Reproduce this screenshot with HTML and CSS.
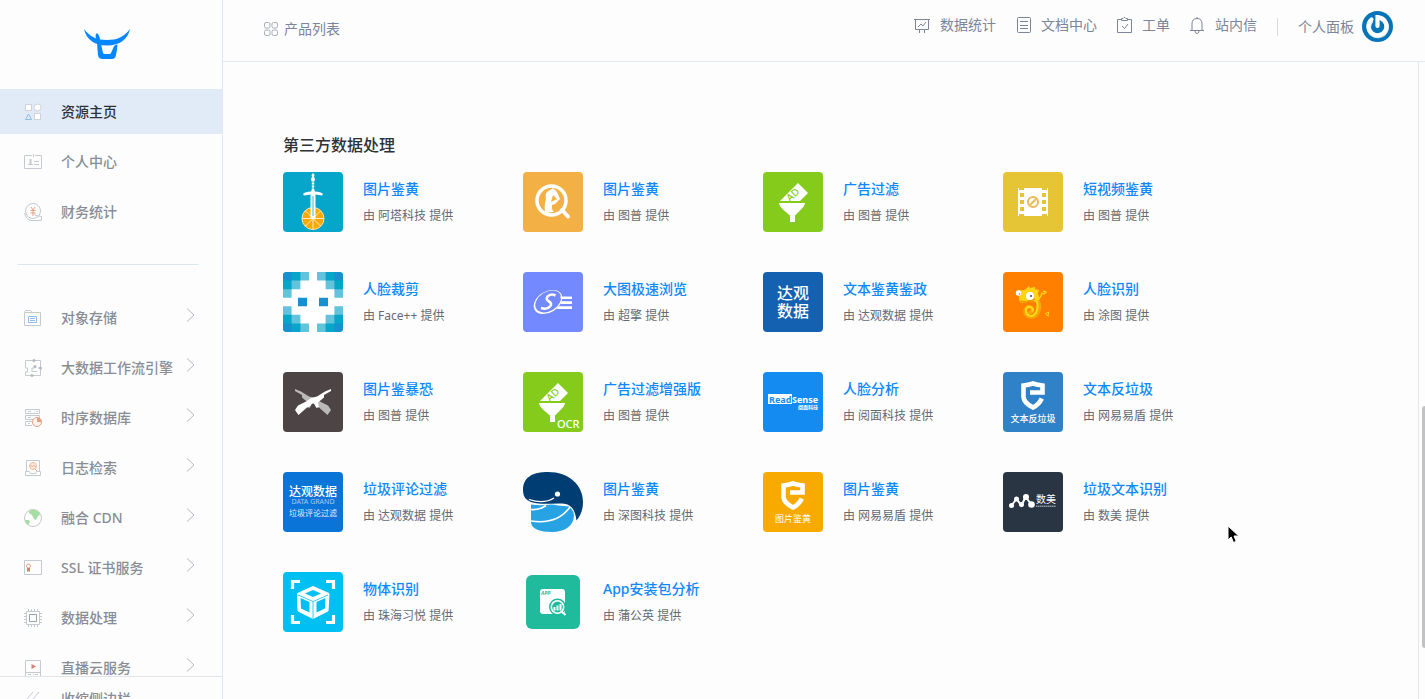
FILE: index.html
```html
<!DOCTYPE html>
<html lang="zh-CN">
<head>
<meta charset="utf-8">
<title>产品列表</title>
<link rel="stylesheet" href="styles.css">
</head>
<body>
<svg class="defs" aria-hidden="true">
  <symbol id="chevron" viewBox="0 0 10 16"><path d="M1 1.500 8 8 1 14.500" fill="none" stroke="#b4b9c6"/></symbol>
  <symbol id="shield" viewBox="0 0 60 60"><path d="M27 20.500H39.500V13.500Q35 13 30 11.500 25 13 20.500 13.500V25Q21 31 30 35.500 36 32.500 38.800 26.500" fill="none" stroke="#fff" stroke-width="4.600"/></symbol>
  <symbol id="funnel" viewBox="0 0 60 60">
    <path d="M16 31h26q0 3-5 7.500l-5 5V50h-5v-6.500l-6-5q-5-4.500-5-7.500zM17 29 35 11l10 10-8 8z" fill="#fff"/>
    <text x="27" y="30" font-size="10" font-weight="500" fill="#84cb1c" transform="rotate(-42 27 30)">AD</text>
    <path d="M16 30h27" stroke="#84cb1c" stroke-width="2"/>
  </symbol>
  <symbol id="rifle" viewBox="0 0 60 60"><path d="M48 17 42 19.500 34 24.500 28 26 24 29 15 33.500 12 38 15.500 43 24 35.500 27 34.500 29 31.500 31 31.500 33.500 36 36 35 35 30.500 41 25.500 41 23 48 19z"/></symbol>
</svg>
<div class="app">
  <aside class="sidebar">
    <a class="logo" href="#" aria-label="首页">
      <svg width="46" height="32" viewBox="0 0 46 32" fill="#0787ff"><path d="M0 1C6 9 13 12 23 12S40 9 46 1C44 11 36 17.500 23 17.500 10 17.500 2 11 0 1z"/><path d="M11.500 8q1-6 4 1l3.500 16q.3 1 1.500 1h5q1 0 1.500-1l2-4.500q1-4 4.500-4-.3 5-1.500 10.500-.6 4-4 4H18.500q-4 0-4.500-4L13 15z"/></svg>
    </a>
    <nav class="menu">
      <a class="menu-item active" href="#"><svg viewBox="0 0 20 20"><g fill="#fff" stroke="#cfd2d8"><rect x="2.500" y="2.500" width="6" height="6"/><circle cx="14.500" cy="5.500" r="3.500"/><rect x="11.500" y="11.500" width="6" height="6"/></g><path d="M5.500 12 2.500 17.500h6z" fill="none" stroke="#90bce8"/></svg><span>资源主页</span></a>
      <a class="menu-item" href="#"><svg viewBox="0 0 20 20"><path d="M9 3.500H1.500v13h17v-13H12M10.500 2v3M5 12.500h5M11 9.500h5M11 12.500h5"/><path d="M7.500 7v5" stroke-width="2"/></svg><span>个人中心</span></a>
      <a class="menu-item" href="#"><svg viewBox="0 0 20 20"><circle cx="10" cy="9" r="7.500"/><path d="M1.500 11Q3 17.500 8 18.500h10.500v-4l-6-1-1-2"/><path class="red" d="m8 5 2 3 2-3M7.500 8.500h5M7.500 11h5M10 8v6"/></svg><span>财务统计</span></a>
      <hr class="divider">
      <a class="menu-item" href="#"><svg viewBox="0 0 20 20"><path d="M1.500 17.500v-13l1-2h5l2 2H17.500v13zM2 4.500h8"/><path class="blue" d="M5.500 8.500h8v6h-8zM7 10.500h5M7 12.500h5"/></svg><span>对象存储</span><svg class="chev"><use href="#chevron"/></svg></a>
      <a class="menu-item" href="#"><svg viewBox="0 0 20 20"><path d="M2.500 7V2.500h15v15h-15V14h2v-4h-2zM9 14v-4h3M9 13.500h5M15 10h3"/><g fill="#b4b9c0" stroke="none"><circle cx="11" cy="2.500" r="1.500"/><circle cx="17.500" cy="10" r="1.500"/><circle cx="9" cy="17.500" r="1.500"/><circle cx="12" cy="8.500" r="1.500"/></g></svg><span>大数据工作流引擎</span><svg class="chev"><use href="#chevron"/></svg></a>
      <a class="menu-item" href="#"><svg viewBox="0 0 20 20"><path d="M2.500 1.500h14v4h-14zM2.500 7.500h14v4h-14zM9 17.500H2.500v-4H9M5 3.500h3M5 9.500h3M5 15.500h2M13 3.500h2"/><circle cx="14" cy="14" r="4.500" fill="#fff4ec" stroke="#e3a087"/><path d="M14 14V9.500A4.500 4.500 0 0 1 18.500 14z" fill="#e3a087" stroke="none"/></svg><span>时序数据库</span><svg class="chev"><use href="#chevron"/></svg></a>
      <a class="menu-item" href="#"><svg viewBox="0 0 20 20"><path d="M3.500 13V2.500h13V13M2.500 13.500h4l1 2h5l1-2h4v4h-15z"/><circle cx="10" cy="8" r="3.500" fill="#fde8da" stroke="#efbd9b"/><path class="red" d="m7.500 7.500 2 1 1-1 2 1M12 11l2 2"/></svg><span>日志检索</span><svg class="chev"><use href="#chevron"/></svg></a>
      <a class="menu-item" href="#"><svg viewBox="0 0 20 20"><circle cx="10" cy="10" r="8.500"/><path d="M6 3q5-3 10 1l1 3-2 1-2 4-2-1-2-4-3-2zM2 12l4 0 1 2-2 3q-3-2-3-5z" fill="#a5dda3" stroke="none"/></svg><span>融合 CDN</span><svg class="chev"><use href="#chevron"/></svg></a>
      <a class="menu-item" href="#"><svg viewBox="0 0 20 20"><path d="M1.500 2.500h17v14h-17z"/><circle class="red" cx="5.500" cy="8" r="2"/><path d="M4 10h3v4l-1.500-1L4 14z" fill="#dc7d6c" stroke="none"/></svg><span>SSL 证书服务</span><svg class="chev"><use href="#chevron"/></svg></a>
      <a class="menu-item" href="#"><svg viewBox="0 0 20 20"><path d="M3.500 3.500h13v13h-13zM5.500 1v2M8.500 1v2M11.500 1v2M14.500 1v2M5.500 17v2M8.500 17v2M11.500 17v2M14.500 17v2M1 5.500h2M1 8.500h2M1 11.500h2M1 14.500h2M17 5.500h2M17 8.500h2M17 11.500h2M17 14.500h2"/><path d="M6.500 6.500h7v7h-7z" stroke="#9ca1a9"/></svg><span>数据处理</span><svg class="chev"><use href="#chevron"/></svg></a>
      <a class="menu-item" href="#"><svg viewBox="0 0 20 20"><path d="M2.500 2.500h15v16h-15zM3 14.500h14M5 16.500h3M10 16.500h1M12 16.500h3"/><path d="M8.500 6l4.500 2.500L8.500 11z" fill="#dc7d7d" stroke="none"/></svg><span>直播云服务</span><svg class="chev"><use href="#chevron"/></svg></a>
    </nav>
    <button class="collapse" type="button"><svg viewBox="0 0 20 20"><path d="m10 3-6 7 6 7M16 3l-6 7 6 7"/></svg><span>收缩侧边栏</span></button>
  </aside>

  <div class="page">
    <header class="topbar">
      <a class="products" href="#"><svg width="14" height="14" viewBox="0 0 14 14"><rect x=".5" y=".5" width="5.500" height="5.500" rx="1.500"/><rect x="8" y=".5" width="5.500" height="5.500" rx="1.500"/><rect x=".5" y="8" width="5.500" height="5.500" rx="1.500"/><rect x="8" y="8" width="5.500" height="5.500" rx="1.500"/></svg>产品列表</a>
      <nav class="links">
        <a href="#"><svg viewBox="0 0 16 18"><path d="M0 3.500h16M1.500 4v9.500h13V4M4 11l3-3 2 2 3-4M5.500 14v3M10.500 14v3"/></svg>数据统计</a>
        <a href="#"><svg viewBox="0 0 16 18"><rect x="2.500" y="1.500" width="13" height="15" rx="1"/><path d="M5 5.500h8M5 9.500h8M5 12.500h8"/></svg>文档中心</a>
        <a href="#"><svg viewBox="0 0 16 18"><path d="M5 3.500H1.500v13h14v-13H12M5.500 4.500v-2H7l1-1h1l1 1h1.500v2zM6 10l2.500 2.500L12 8"/></svg>工单</a>
        <a href="#"><svg viewBox="0 0 16 18"><path d="M1 14.500h14M3 14V8q0-5.500 5-5.500T13 8v6M6 15q0 2.500 2 2.500t2-2.500M8 1v1"/></svg>站内信</a>
      </nav>
      <a class="user" href="#">个人面板
        <svg width="31" height="31" viewBox="0 0 31 31"><circle cx="15.500" cy="15.500" r="15.500" fill="#0674b8" stroke="none"/><path d="M9.500 8.500a9 9 0 1 0 9-1.700" fill="none" stroke="#cfd8de" stroke-width="4.400" transform="translate(.4 .8)"/><path d="M9.500 8.500a9 9 0 1 0 9-1.700q-1.500-.8-3-.8v9" fill="none" stroke="#fff" stroke-width="4.200" stroke-linecap="round"/></svg>
      </a>
    </header>
    <div class="body">
      <main class="content">
        <h2>第三方数据处理</h2>
        <ul class="grid">
          <li class="card"><svg class="tile" style="background:#05a6c9" viewBox="0 0 60 60"><circle cx="30" cy="46.500" r="11" fill="#fba800" stroke="#ffe7b5"/><path d="M30 36v21M19.500 46.500h21M22.500 39l15 15M37.500 39l-15 15" stroke="#fff" stroke-width=".8"/><path d="M20 22q2-2.500 8-2.500l.8-2V10l-.8-3 1-2-.5-2L30 1l1.500 2-.5 2 1 2-.8 3v7.500l.8 2q6 0 8 2.500l-1 1.500-6.500-1V46h-5V22.500l-6.500 1z" fill="#fff"/><path d="M30 24v20M28 10h4M28 13h4M28 16h4" stroke="#05a6c9" stroke-width=".8"/></svg><div><a href="#">图片鉴黄</a><p>由 阿塔科技 提供</p></div></li>
          <li class="card"><svg class="tile" style="background:#f3b044" viewBox="0 0 60 60"><circle cx="28.500" cy="28.500" r="14.500" fill="none" stroke="#fff" stroke-width="3.600"/><path d="m39 38 6 6.500" stroke="#fff" stroke-width="4" stroke-linecap="round"/><path d="M22 41q-1-9 1-14-1-5 1-7l6-4 4 4 3 7-5 5-3 1q-1 4 2 7zM30 23l-2 7 6-3z" fill="#fff" fill-rule="evenodd"/></svg><div><a href="#">图片鉴黄</a><p>由 图普 提供</p></div></li>
          <li class="card"><svg class="tile" style="background:#84cb1c" viewBox="0 0 60 60"><use href="#funnel"/></svg><div><a href="#">广告过滤</a><p>由 图普 提供</p></div></li>
          <li class="card"><svg class="tile" style="background:#e5c436" viewBox="0 0 60 60"><path d="M15 16h30v28H15z" fill="#fff"/><path d="M16 16h5v2h-5zM17 21h4v4h-4zM17 28h4v4h-4zM17 35h4v4h-4zM16 42h5v2h-5zM39 16h5v2h-5zM39 21h4v4h-4zM39 28h4v4h-4zM39 35h4v4h-4zM39 42h5v2h-5z" fill="#e5c436"/><circle cx="30" cy="30" r="5" fill="none" stroke="#edb95c" stroke-width="2"/><path d="m27 33 6-6" stroke="#edb95c" stroke-width="2"/></svg><div><a href="#">短视频鉴黄</a><p>由 图普 提供</p></div></li>

          <li class="card"><svg class="tile" style="background:#fff" viewBox="0 0 60 60"><path fill="#62c3dd" d="M0 0h26v8.600h-8.600v8.600H8.600v8.600H0zM60 0H34v8.600h8.600v8.600h8.800v8.600H60zM0 60h26v-8.600h-8.600v-8.600H8.600v-8.600H0zM60 60H34v-8.600h8.600v-8.600h8.800v-8.600H60z"/><path fill="#05a6c9" d="M0 0h17.400v8.600H8.600v8.600H0zM60 0H42.600v8.600h8.800v8.600H60zM0 60h17.400v-8.600H8.600v-8.600H0zM60 60H42.600v-8.600h8.800v-8.600H60z"/><path fill="#1690cf" d="M0 0h8.600v8.600H0zM51.400 0H60v8.600h-8.600zM0 51.400h8.600V60H0zM51.400 51.400H60V60h-8.600zM15 25.700h9v8.600h-9zM36 25.700h9v8.600h-9z"/></svg><div><a href="#">人脸裁剪</a><p>由 Face++ 提供</p></div></li>
          <li class="card"><svg class="tile" style="background:#7289ff" viewBox="0 0 60 60"><g transform="rotate(-32 25 30)"><ellipse cx="25" cy="30" rx="15.500" ry="10.500" fill="#fff"/><ellipse cx="25.500" cy="29.600" rx="14" ry="9.600" fill="#7289ff"/></g><path d="M37 24.500h12v2.600H38zM37.500 29.300h11.500v2.600H36.500zM36 34.300h13v2.600H33.500z" fill="#fff"/><path d="M32.500 23.500q-5-2.500-8 1-2 3 1.500 5t1 5q-3 3.500-9 1.500" stroke="#fff" stroke-width="2.600" fill="none"/></svg><div><a href="#">大图极速浏览</a><p>由 超擎 提供</p></div></li>
          <li class="card"><svg class="tile" style="background:#1461b1" viewBox="0 0 60 60"><g fill="#fff" font-size="16" font-weight="500"><text x="14" y="27">达观</text><text x="14" y="45">数据</text></g></svg><div><a href="#">文本鉴黄鉴政</a><p>由 达观数据 提供</p></div></li>
          <li class="card"><svg class="tile" style="background:#ff8000" viewBox="0 0 60 60"><path d="M31 26q7 3 5 12-2 7-8 7-6-1-6-6 1-5 5-4 4 2 2 5-2 1-3-1" fill="none" stroke="#f5aa0a" stroke-width="3.500"/><path d="M31 26q5 4 3 12-2 6-6 6-5-1-5-6 1-4 5-3 3 2 1 4" fill="none" stroke="#ffda18" stroke-width="2"/><path d="M16 18q4 1 7-1l3-3 1 2 5-1v2l4 1-1 3 1 5-3 4-3-1-6 1-5 1q-4-2-3-7z" fill="#ffd215"/><path d="m35 28 3-4 1-3M40 19l3 1-2 2-3-1" stroke="#ffd215" stroke-width="1.500" fill="none"/><path d="M18 29q4 2 8 0l6-2" stroke="#f19300" stroke-width="1.500" fill="none"/><circle cx="27" cy="24" r="4" fill="#fff"/><circle cx="15.500" cy="21" r="2.800" fill="#fff"/><circle cx="28" cy="24" r="1" fill="#554433"/><circle cx="16.500" cy="22" r=".8" fill="#cc7700"/><path d="m42 42 4-2-1 3 1 1-3-1" stroke="#ffd215" fill="none"/></svg><div><a href="#">人脸识别</a><p>由 涂图 提供</p></div></li>

          <li class="card"><svg class="tile" style="background:#4d4545" viewBox="0 0 60 60"><use href="#rifle" fill="#bdb9b9" transform="matrix(-1 0 0 1 60 0)"/><use href="#rifle" fill="#fff"/></svg><div><a href="#">图片鉴暴恐</a><p>由 图普 提供</p></div></li>
          <li class="card"><svg class="tile" style="background:#84cb1c" viewBox="0 0 60 60"><use href="#funnel"/><text x="34" y="56" font-size="11" font-weight="500" fill="#fff">OCR</text></svg><div><a href="#">广告过滤增强版</a><p>由 图普 提供</p></div></li>
          <li class="card"><svg class="tile" style="background:#148bf0" viewBox="0 0 60 60"><path d="M5 22h24v10H5z" fill="#fff"/><text x="6" y="31" font-size="9" font-weight="700" fill="#148bf0">Read</text><text x="29" y="31" font-size="9" font-weight="700" fill="#fff">Sense</text><text x="35" y="37" font-size="5" font-weight="700" fill="#fff">阅面科技</text></svg><div><a href="#">人脸分析</a><p>由 阅面科技 提供</p></div></li>
          <li class="card"><svg class="tile" style="background:#3082c8" viewBox="0 0 60 60"><use href="#shield"/><text x="30" y="50" font-size="9" font-weight="500" text-anchor="middle" fill="#fff">文本反垃圾</text></svg><div><a href="#">文本反垃圾</a><p>由 网易易盾 提供</p></div></li>

          <li class="card"><svg class="tile" style="background:#0b74d8" viewBox="0 0 60 60"><g text-anchor="middle"><text x="30" y="24" font-size="12" font-weight="500" fill="#fff">达观数据</text><text x="30" y="32" font-size="7" fill="#a4cbf2">DATA GRAND</text><text x="30" y="44" font-size="8" fill="#e2effc">垃圾评论过滤</text></g></svg><div><a href="#">垃圾评论过滤</a><p>由 达观数据 提供</p></div></li>
          <li class="card"><svg class="tile" viewBox="0 0 60 60"><path d="M0 18C0 5 10 0 25 0c21 0 35 13 35 30 0 9-3 14-6.500 18.500C52 37 48 32 39 31.500 25 31 11 34 3 27 1 25 0 22 0 18z" fill="#003d73"/><path d="M6 27.500q15 5 25-1.500" fill="none" stroke="#fff" stroke-width="1.300"/><circle cx="34.500" cy="22" r="2.600" fill="#fff"/><path d="M8 32.500q8 1 15 .5 6-1 12 .5l11 1q5 4 5 9c0 10-9 16.500-22 16.500-12 0-20-3-21-9z" fill="#27a3e4"/><path d="M8 37.500q8 1 15-4M8 49q26 4 39-14" fill="none" stroke="#fff" stroke-width="1.600"/></svg><div><a href="#">图片鉴黄</a><p>由 深图科技 提供</p></div></li>
          <li class="card"><svg class="tile" style="background:#f8aa00" viewBox="0 0 60 60"><use href="#shield"/><text x="30" y="50" font-size="9" text-anchor="middle" fill="#fff">图片鉴黄</text></svg><div><a href="#">图片鉴黄</a><p>由 网易易盾 提供</p></div></li>
          <li class="card"><svg class="tile" style="background:#293543" viewBox="0 0 60 60"><path d="M8.500 33.500 13.500 27l5 6.500 4-8.500 6 7.500" fill="none" stroke="#fff" stroke-width="2"/><g fill="#fff"><circle cx="8.500" cy="33.500" r="2.500"/><circle cx="13.500" cy="27" r="2.500"/><circle cx="18.500" cy="32.500" r="2.500"/><circle cx="23" cy="25" r="3"/><circle cx="28.500" cy="32.500" r="3.300"/><text x="33" y="31" font-size="10">数美</text></g><path d="M33 34.200h20" stroke="#c9ced4" stroke-dasharray="1.500 .5"/></svg><div><a href="#">垃圾文本识别</a><p>由 数美 提供</p></div></li>

          <li class="card"><svg class="tile" style="background:#00c0f3" viewBox="0 0 60 60"><path d="M17 9.500H9.500V17M43 9.500h7.500V17M9.500 43v7.500H17M50.500 43v7.500H43" fill="none" stroke="#fff" stroke-width="3.200"/><path d="M30 14.500 46 21.500 45 39 30 46.500 15 39 14.500 21.500z" fill="#fff" stroke="#fff" stroke-linejoin="round"/><path d="m30 18 8 3.500-8 3.500-8-3.500zM17.500 26l9 4v10.500l-8.500-4zM42.500 26l-9 4v10.500l8.500-4z" fill="#00c0f3"/><path d="m15 23 15 6.500L45 23M30 29.500V47" fill="none" stroke="#00c0f3" stroke-width=".8"/></svg><div><a href="#">物体识别</a><p>由 珠海习悦 提供</p></div></li>
          <li class="card"><svg class="tile" viewBox="0 0 60 60"><rect x="3" y="3" width="54" height="54" rx="6" fill="#1fbb9c"/><rect x="17" y="17" width="25" height="25" rx="3" fill="#fff"/><text x="18" y="23" font-size="5" font-weight="700" font-style="italic" fill="#1fbb9c">APP</text><circle cx="34.500" cy="35" r="8.500" fill="#1fbb9c"/><circle cx="34.500" cy="35" r="6.200" fill="none" stroke="#fff" stroke-width="1.600"/><path d="m39 40 3.500 3" stroke="#fff" stroke-width="2"/><path d="M31.500 35v3.500M34.500 33.500v5M37.500 32v6.500" stroke="#fff" stroke-width="2"/></svg><div><a href="#">App安装包分析</a><p>由 蒲公英 提供</p></div></li>
        </ul>
      </main>
      <div class="scrollbar"><div class="thumb"></div></div>
    </div>
  </div>
  <svg class="cursor" width="13" height="19" viewBox="0 0 13 19"><path d="M1 1v14l3.200-3 2.300 5.500 2.700-1.200L7 11h4.800z" fill="#000" stroke="#fff"/></svg>
</div>
</body>
</html>
```
FILE: styles.css
```css
* { box-sizing: border-box; }
body {
  margin: 0;
  background: #fdfdfd;
  font-family: "Noto Sans", "Noto Sans CJK SC", sans-serif;
  font-size: 14px;
  line-height: 20px;
  color: #7c8599;
}
a { color: inherit; text-decoration: none; }
.defs { position: absolute; width: 0; height: 0; }
.app { position: relative; display: flex; height: 100vh; overflow: hidden; }

.sidebar {
  flex: none;
  display: flex;
  flex-direction: column;
  width: 223px;
  border-right: 1px solid #e0e6f5;
}
.logo { flex: none; display: flex; justify-content: center; height: 89px; padding: 28px 8px 0 0; }
.menu { flex: 1; min-height: 0; overflow: hidden; }
.menu-item {
  display: flex;
  align-items: center;
  height: 45px;
  margin-bottom: 5px;
  padding: 1px 26px 0 23px;
  color: #888d95;
  font-weight: 500;
}
.menu-item.active { background: #e1ebf7; color: #2e3238; }
.menu-item svg, .collapse svg {
  width: 20px;
  height: 20px;
  margin-right: 18px;
  fill: none;
  stroke: #c5c9d0;
}
.menu-item .red { stroke: #e8a184; }
.menu-item .blue { stroke: #8fbce8; }
.menu-item .chev { width: 10px; height: 16px; margin: 0 0 6px auto; }
.divider { height: 1px; margin: 30px 24px 30px 18px; border: 0; background: #d9e6f2; }
.collapse {
  flex: none;
  display: flex;
  align-items: flex-start;
  height: 23px;
  padding: 12px 23px 0;
  border: 0;
  border-top: 1px solid #e1e5ea;
  background: none;
  overflow: hidden;
  font: inherit;
  font-weight: 500;
  color: #888d95;
}

.page { flex: 1; min-width: 0; display: flex; flex-direction: column; }
.topbar {
  flex: none;
  display: flex;
  align-items: flex-start;
  height: 62px;
  padding: 0 32px 0 41px;
  border-bottom: 1px solid #e1e9f1;
}
.topbar svg { fill: none; stroke: #7c8599; }
.products { display: flex; align-items: center; gap: 6px; height: 58px; margin-right: auto; }
.products svg { stroke: #a9aeb9; }
.links { display: flex; gap: 19px; height: 50px; }
.links a { display: flex; align-items: center; gap: 10px; }
.links svg { width: 16px; height: 18px; }
.user { display: flex; align-items: center; gap: 8px; height: 53px; margin-left: 20px; }
.user::before { content: ""; width: 1px; height: 18px; margin-right: 12px; background: #d5dae3; }

.body { flex: 1; min-height: 0; display: flex; }
.content { flex: 1; overflow: hidden; padding: 72px 60px 0; }
.content h2 { margin: 0 0 16px; font-size: 16px; line-height: 22px; font-weight: 500; color: #2e3238; }
.grid {
  display: grid;
  grid-template-columns: repeat(auto-fill, 240px);
  gap: 40px 0;
  margin: 0;
  padding: 0;
  list-style: none;
}
.card { display: flex; gap: 20px; height: 60px; }
.card div { padding-top: 7px; }
.card a { display: block; font-weight: 500; color: #0f88fb; }
.card p { margin: 7px 0 0; font-size: 12px; color: #666a72; }
.tile { flex: none; width: 60px; height: 60px; border-radius: 4px; }

.scrollbar { position: relative; flex: none; width: 7px; border-left: 1px solid #e4e6e8; }
.thumb {
  position: absolute;
  top: 54%;
  right: 0;
  width: 3px;
  height: 38%;
  border-radius: 3px 0 0 3px;
  background: #c1c2c4;
}
.cursor { position: absolute; left: 1227px; top: 525px; }
```
